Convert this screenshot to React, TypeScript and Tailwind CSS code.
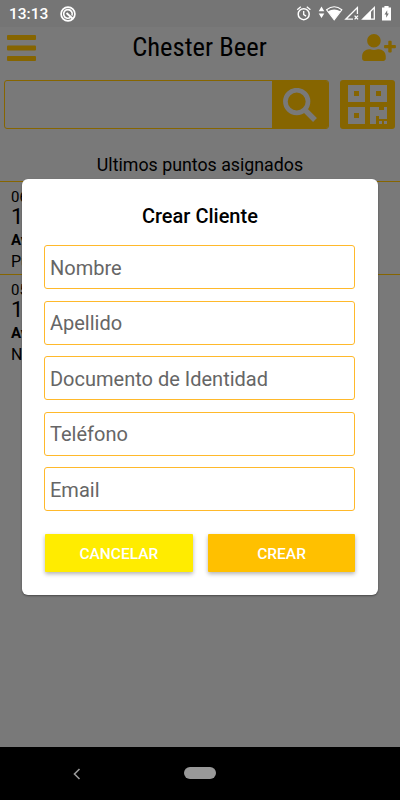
import React from 'react';
import { FaUserPlus } from 'react-icons/fa';

const StatusIcons = () => (
    <svg viewBox="296 4 98 20" className="h-5 w-[98px]" fill="none" stroke="#fff">
        <circle cx="303.7" cy="14.2" r="5.5" strokeWidth="1.5" />
        <path d="M297.2 9.8 300.8 6.8M310.4 9.8 306.8 6.8M303.7 11v3.6l2.4 1.5" strokeWidth="1.3" />
        <path d="m321.5 6.6 2.8 4.6h-5.6zM321.5 18l2.8-4.6h-5.6z" fill="#fff" stroke="none" />
        <path d="M326.6 9.8Q334.2 3.6 341.8 9.8L334.2 19.8Z" strokeWidth="1.1" />
        <path d="M328 11.2Q334.2 7.6 340.4 11.2L334.2 19.8Z" fill="#fff" stroke="none" />
        <path d="M357.4 14V7.6L345.8 19.2H353M354.6 15.6l3.4 3.8m0-3.8-3.4 3.8" strokeWidth="1.3" />
        <path d="M374.3 7.6V19.2H362.7z" strokeWidth="1.3" />
        <path d="M371 11v8.2h-8.2z" fill="#fff" stroke="none" />
        <path d="M384.4 6h4.2v1.5h2.4v13h-9V7.5h2.4z" fill="#fff" stroke="none" />
        <path d="m387.2 10.2-2.7 4.4h1.7v3.2l2.6-4.4h-1.6z" fill="#757575" stroke="none" />
    </svg>
);

const QrIcon = () => (
    <svg viewBox="0 0 40 40" className="h-10 w-10" fill="#797979">
        <path fillRule="evenodd" d="M0 0h17v17H0zM6 6v5h5V6zM22 0h17v17H22zM28 6v5h5V6zM0 22h17v17H0zM6 28v5h5v-5z" />
        <path d="M22 22h9v3h5v-3h3v12h-8v-3h-3v8h-6zM31 36h3v3h-3zM36 36h3v3h-3z" />
    </svg>
);

const fields = ['Nombre', 'Apellido', 'Documento de Identidad', 'Teléfono', 'Email'];

const rows = [
    { date: '06', points: '1', name: 'Av', note: 'Pu' },
    { date: '05', points: '1', name: 'Av', note: 'No' },
];

export default function App() {
    return (
        <div className="relative flex h-[800px] w-[400px] flex-col overflow-hidden bg-[#797979] font-['Roboto','Liberation_Sans',sans-serif] text-black">
            <div className="flex h-[27px] shrink-0 items-center bg-[#757575] pr-[6px] pl-[9px] text-white">
                <span className="w-[51px] pt-px text-[15.5px] leading-[27px] font-medium">13:13</span>
                <svg viewBox="0 0 16 16" className="h-4 w-4" fill="none" stroke="#fff">
                    <circle cx="8" cy="8" r="6.9" strokeWidth="1.7" />
                    <path d="M10.5 11.4A4.3 4.3 0 1 1 12 9.4" strokeWidth="1.6" />
                    <path d="m6.5 7 6.3 5.8" strokeWidth="2" />
                </svg>
                <div className="ml-auto"><StatusIcons /></div>
            </div>

            <header className="flex h-[53px] shrink-0 items-start justify-between pt-2 pr-1 pl-[7px]">
                <svg viewBox="0 0 29 26" className="h-[26px] w-[29px]" fill="#866500">
                    <rect width="29" height="5" rx="1" />
                    <rect y="10.5" width="29" height="5" rx="1" />
                    <rect y="21" width="29" height="5" rx="1" />
                </svg>
                <h1 className="ml-px w-[160px] text-center text-[26.6px] leading-[23px] whitespace-nowrap font-['Roboto_Condensed','Roboto',sans-serif]">Chester Beer</h1>
                <FaUserPlus className="-mt-px h-[27px] w-[34px] text-[#866500]" />
            </header>

            <div className="flex h-[49px] shrink-0 gap-[11px] pr-[5px] pl-[4px]">
                <div className="flex w-[325px] overflow-hidden rounded-[3px] border border-[#866500]">
                    <div className="flex-1" />
                    <div className="flex w-[56px] items-center justify-center bg-[#866500]">
                        <svg viewBox="0 0 34 34" className="h-[34px] w-[34px]" fill="none" stroke="#797979">
                            <circle cx="13.7" cy="13.5" r="11.3" strokeWidth="4.7" />
                            <path d="m22 22 10 10" strokeWidth="5.4" />
                        </svg>
                    </div>
                </div>
                <div className="flex flex-1 items-center justify-center rounded-[3px] bg-[#866500] pl-px">
                    <QrIcon />
                </div>
            </div>

            <h2 className="mt-[24px] h-[28px] shrink-0 text-center text-[17.8px] leading-[24px]">Ultimos puntos asignados</h2>

            {rows.map((row) => (
                <div key={row.date} className="h-[93px] shrink-0 border-t border-[#866500] pt-[7px] pl-[11px]">
                    <p className="h-[17px] text-[15px] leading-[17px]">{row.date}</p>
                    <p className="h-[21px] text-[22px] leading-[21px]">{row.points}</p>
                    <p className="mt-[3px] h-[21px] text-[15px] leading-[21px] font-bold">{row.name}</p>
                    <p className="h-[21px] text-[16px] leading-[21px]">{row.note}</p>
                </div>
            ))}

            <nav className="mt-auto flex h-[53px] shrink-0 items-center bg-black pl-[73px]">
                <svg viewBox="0 0 8 12" className="h-3 w-2" fill="none" stroke="#999" strokeWidth="1.6">
                    <path d="M6.5 1 1.5 6l5 5" />
                </svg>
                <div className="-mt-px ml-[103px] h-3 w-8 rounded-full bg-[#999]" />
            </nav>

            <div className="absolute top-[179px] left-[22px] flex h-[416px] w-[356px] flex-col rounded-[6px] bg-white pt-[24px] pr-[22.6px] pl-[22.4px] shadow-[0_1px_2px_rgba(0,0,0,0.4)]">
                <h3 className="h-[42px] pt-px text-center text-[20px] leading-[25px] font-medium">Crear Cliente</h3>
                <form className="flex flex-col gap-[11.5px]">
                    {fields.map((field) => (
                        <input
                            key={field}
                            placeholder={field}
                            className="h-[44px] w-full rounded-[3px] border border-[#ffb92b] px-[4.6px] pt-px text-[20px] placeholder:text-[#666]"
                        />
                    ))}
                </form>
                <div className="mt-[23px] flex gap-[15px] pl-[0.6px]">
                    <button className="h-[38px] flex-1 rounded-[1px] bg-[#ffec00] pt-[3px] text-[15.5px] font-medium text-white shadow-[0_2px_4px_rgba(0,0,0,0.3)]">CANCELAR</button>
                    <button className="h-[38px] flex-1 rounded-[1px] bg-[#ffc000] pt-[3px] text-[15.5px] font-medium text-white shadow-[0_2px_4px_rgba(0,0,0,0.3)]">CREAR</button>
                </div>
            </div>
        </div>
    );
}
